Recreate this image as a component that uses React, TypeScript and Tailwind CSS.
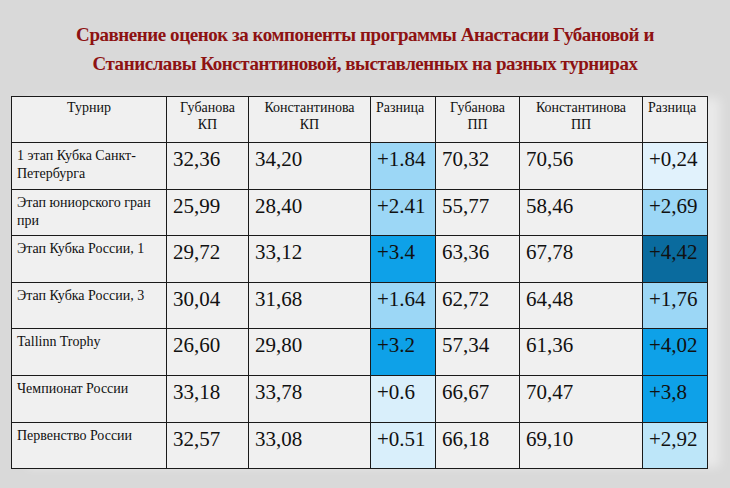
const rows = [
  { name: "1 этап Кубка Санкт-Петербурга", g1: "32,36", k1: "34,20", d1: "+1.84", c1: "bg-[#9cd7f6]", g2: "70,32", k2: "70,56", d2: "+0,24", c2: "bg-[#e1f2fc]", h: "h-[47px]" },
  { name: "Этап юниорского гран при", g1: "25,99", k1: "28,40", d1: "+2.41", c1: "bg-[#9cd7f6]", g2: "55,77", k2: "58,46", d2: "+2,69", c2: "bg-[#9cd7f6]", h: "h-[46px]" },
  { name: "Этап Кубка России, 1", g1: "29,72", k1: "33,12", d1: "+3.4", c1: "bg-[#0ea1e8]", g2: "63,36", k2: "67,78", d2: "+4,42", c2: "bg-[#0a6b9e]", h: "h-[47px]" },
  { name: "Этап Кубка России, 3", g1: "30,04", k1: "31,68", d1: "+1.64", c1: "bg-[#9cd7f6]", g2: "62,72", k2: "64,48", d2: "+1,76", c2: "bg-[#9cd7f6]", h: "h-[46px]" },
  { name: "Tallinn Trophy", g1: "26,60", k1: "29,80", d1: "+3.2", c1: "bg-[#0ea1e8]", g2: "57,34", k2: "61,36", d2: "+4,02", c2: "bg-[#0ea1e8]", h: "h-[47px]" },
  { name: "Чемпионат России", g1: "33,18", k1: "33,78", d1: "+0.6", c1: "bg-[#d9effb]", g2: "66,67", k2: "70,47", d2: "+3,8", c2: "bg-[#0ea1e8]", h: "h-[47px]" },
  { name: "Первенство России", g1: "32,57", k1: "33,08", d1: "+0.51", c1: "bg-[#d9effb]", g2: "66,18", k2: "69,10", d2: "+2,92", c2: "bg-[#bde6f9]", h: "h-[46px]" },
];

const th = "border border-[#1a1a1a] align-top font-normal text-[14px] leading-[17px] pt-[2px] px-1";
const td = "border border-[#1a1a1a] align-top text-[21px] leading-[22px] pt-[5px] pl-[6px] text-[#111]";

export default function App() {
  return (
    <div className="w-[730px] h-[488px] bg-[#d9d9d9] overflow-hidden font-['Liberation_Serif']">
      <h1 className="pt-[20px] text-center text-[19px] leading-[29px] font-bold text-[#8e1212] tracking-[-0.45px]">
        Сравнение оценок за компоненты программы Анастасии Губановой и
        <br />
        Станиславы Константиновой, выставленных на разных турнирах
      </h1>
      <div className="mt-[18px] ml-[11px] w-[697px] shadow-[14px_0_10px_-2px_rgba(255,255,255,0.45)]">
        <table className="w-[697px] table-fixed border-collapse bg-[#f0f0f0] text-[#111]">
          <thead>
            <tr className="h-[46px]">
              <th className={`${th} w-[155px]`}>Турнир</th>
              <th className={`${th} w-[82px]`}>Губанова<br />КП</th>
              <th className={`${th} w-[122px]`}>Константинова<br />КП</th>
              <th className={`${th} w-[65px] text-left pl-[5px]`}>Разница</th>
              <th className={`${th} w-[84px]`}>Губанова<br />ПП</th>
              <th className={`${th} w-[123px]`}>Константинова<br />ПП</th>
              <th className={`${th} w-[65px] text-left pl-[5px]`}>Разница</th>
            </tr>
          </thead>
          <tbody>
            {rows.map((r) => (
              <tr key={r.name} className={r.h}>
                <td className="border border-[#1a1a1a] align-top text-[14px] leading-[18px] pt-[4px] pl-[5px] pr-1">{r.name}</td>
                <td className={td}>{r.g1}</td>
                <td className={td}>{r.k1}</td>
                <td className={`${td} ${r.c1}`}>{r.d1}</td>
                <td className={td}>{r.g2}</td>
                <td className={td}>{r.k2}</td>
                <td className={`${td} ${r.c2}`}>{r.d2}</td>
              </tr>
            ))}
          </tbody>
        </table>
      </div>
    </div>
  );
}
